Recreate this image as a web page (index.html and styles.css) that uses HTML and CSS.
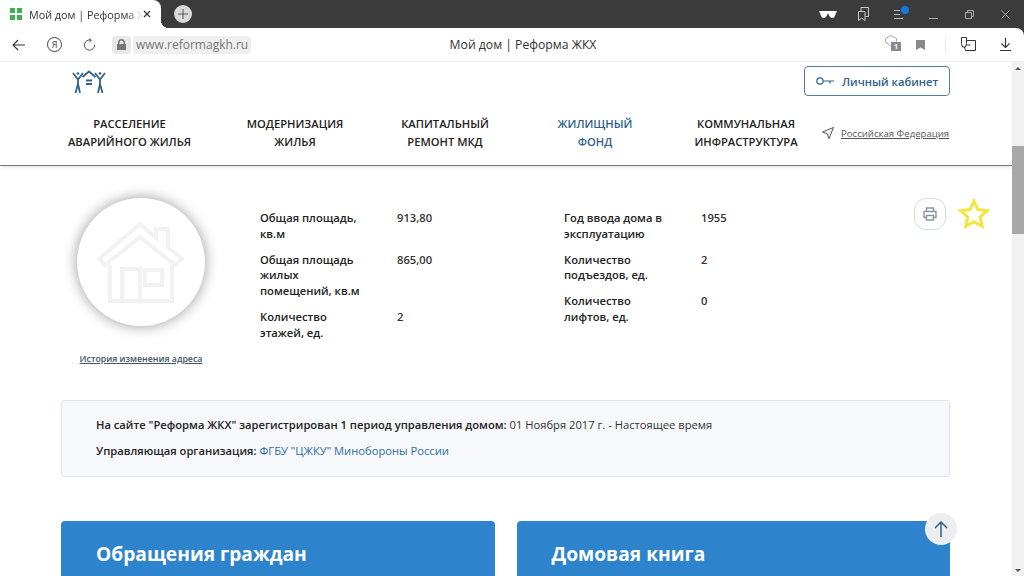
FILE: index.html
```html
<!DOCTYPE html>
<html lang="ru">

<head>
    <meta charset="UTF-8">
    <title>Мой дом | Реформа ЖКХ</title>
    <link rel="stylesheet" href="styles.css">
</head>

<body>
    <div class="tabbar">
        <div class="tab">
            <svg class="tab-icon" width="12" height="12" viewBox="0 0 12 12">
                <rect width="5" height="5" fill="#3db14b" />
                <rect x="7" width="5" height="5" fill="#3db14b" />
                <rect y="7" width="5" height="5" fill="#3db14b" />
                <rect x="7" y="7" width="5" height="5" fill="#3db14b" />
            </svg>
            <span class="tab-title">Мой дом | Реформа ЖКХ</span>
            <svg width="8" height="8" viewBox="0 0 8 8" stroke="#333" stroke-width="1.2">
                <path d="M1 1l6 6M7 1l-6 6" />
            </svg>
        </div>
        <div class="new-tab">
            <svg width="10" height="10" viewBox="0 0 10 10" stroke="#555" stroke-width="1">
                <path d="M5 0v10M0 5h10" />
            </svg>
        </div>
        <div class="window-btns">
            <svg width="18" height="7" viewBox="0 0 20 8" fill="#fff">
                <path d="M0 0h20v1.500l-1 .5c-.5 3-1.500 6-4 6s-4-3-4.500-5h-1c-.5 2-2 5-4.500 5s-3.500-3-4-6l-1-.5z" />
            </svg>
            <svg class="win-collections" width="11" height="14" viewBox="0 0 11 14" fill="none" stroke="#ccc">
                <path d="M.5 4.500h6.500v9l-3.250-2.500-3.250 2.500zM3 4V.5h7.500v9H7.500" />
            </svg>
            <div class="win-menu">
                <svg width="9" height="9" viewBox="0 0 9 9" stroke="#bbb">
                    <path d="M0 .5h6M0 4.500h6M0 8.500h9" />
                </svg>
                <span class="win-dot"></span>
            </div>
            <svg class="win-min" width="9" height="9" viewBox="0 0 9 9" stroke="#aaa">
                <path d="M0 8.500h9" />
            </svg>
            <svg class="win-restore" width="9" height="9" viewBox="0 0 9 9" fill="none" stroke="#aaa">
                <path d="M.5 2.500h6v6h-6zM2.500 2.500v-2h6v6h-2" />
            </svg>
            <svg class="win-close" width="9" height="9" viewBox="0 0 9 9" stroke="#aaa">
                <path d="M.5 .5l8 8M8.500 .5l-8 8" />
            </svg>
        </div>
    </div>

    <div class="toolbar">
        <svg class="tool-back" width="13" height="12" viewBox="0 0 13 12" fill="none" stroke="#333" stroke-width="1.100">
            <path d="M13 6H1M6 1L1 6l5 5" />
        </svg>
        <span class="tool-ya">Я</span>
        <svg class="tool-reload" width="13" height="14" viewBox="0 0 14 14" fill="none" stroke="#444">
            <path d="M8.500 1.800A5.500 5.500 0 1 0 12.500 7M6.500 .2l2.300 1.600-1.700 2.200" />
        </svg>
        <span class="lock">
            <svg width="9" height="11" viewBox="0 0 9 11">
                <path d="M1 5V3.500a3.500 3.500 0 0 1 7 0V5h1v6H0V5zM2.500 5h4V3.500a2 2 0 0 0-4 0z" fill="#777" />
            </svg>
        </span>
        <span class="url">www.reformagkh.ru</span>
        <span class="page-title">Мой дом | Реформа ЖКХ</span>
        <div class="tool-right">
            <span class="shield">
                <svg width="12" height="12" viewBox="0 0 12 12" fill="none" stroke="#aaa">
                    <path d="M.5 3.500L6 .5l5.500 3v3L6 11.500.5 6.500z" />
                </svg>
                <span class="shield-count">1</span>
            </span>
            <svg class="tool-mark" width="9" height="10" viewBox="0 0 9 10" fill="#8a8a8a">
                <path d="M0 0h9v10L4.500 7.500 0 10z" />
            </svg>
            <span class="tool-sep"></span>
            <svg class="tool-wallet" width="15" height="15" viewBox="0 0 15 15" fill="none" stroke="#333">
                <path d="M5.500 3.500h9v10H4.500l-1-3.500M.5 .5h5v6l-1 3.500h-3L.5 6.500zM5.500 8h4" />
            </svg>
            <svg class="tool-down" width="11" height="13" viewBox="0 0 11 13" fill="none" stroke="#333" stroke-width="1.100">
                <path d="M5.500 0v9.500M1.500 5.500l4 4 4-4M0 12.500h11" />
            </svg>
        </div>
    </div>

    <div class="viewport">
        <div class="page">
            <header class="site-header">
                <div class="header-top">
                    <svg class="logo" width="34" height="23" viewBox="0 0 34 23" fill="none" stroke="#2f628c" stroke-width="1.800">
                        <path d="M1 3l5 6.500L11 3M6 9.500V14L3.500 23M6 14l2 9" />
                        <path d="M33 3l-5 6.500L23 3M28 9.500V14l2.500 9M28 14l-2 9" />
                        <path d="M10.500 7L17 1.500 23.500 7" />
                        <path d="M14 10.500h6M14 14h6" stroke-width="2" />
                        <circle cx="6" cy="3.500" r="1.300" fill="#2f628c" stroke="none" />
                        <circle cx="28" cy="3.500" r="1.300" fill="#2f628c" stroke="none" />
                    </svg>
                    <a class="cabinet-btn">
                        <svg width="18" height="8" viewBox="0 0 18 8" fill="none" stroke="#2f628c" stroke-width="1.200">
                            <circle cx="4" cy="4" r="3.200" />
                            <path d="M7 4h11M14 4v2.500" />
                        </svg>
                        Личный кабинет
                    </a>
                </div>
                <nav class="main-nav">
                    <a class="nav-item nav-w1">РАССЕЛЕНИЕ<br>АВАРИЙНОГО ЖИЛЬЯ</a>
                    <a class="nav-item nav-w2">МОДЕРНИЗАЦИЯ<br>ЖИЛЬЯ</a>
                    <a class="nav-item nav-w3">КАПИТАЛЬНЫЙ<br>РЕМОНТ МКД</a>
                    <a class="nav-item nav-w4 nav-active">ЖИЛИЩНЫЙ<br>ФОНД</a>
                    <a class="nav-item nav-w5">КОММУНАЛЬНАЯ<br>ИНФРАСТРУКТУРА</a>
                    <a class="region">
                        <svg width="12" height="12" viewBox="0 0 12 12" fill="none" stroke="#555">
                            <path d="M11.500 .5L.5 5l4.700 1.800L7 11.500z" />
                        </svg>
                        <span>Российская Федерация</span>
                    </a>
                </nav>
            </header>

            <section class="house">
                <div class="house-photo">
                    <div class="house-circle">
                        <svg width="90" height="82" viewBox="0 0 90 82" fill="none" stroke="#f2f2f2" stroke-width="4">
                            <path d="M3 38L44 3l16 14V8h12v18l14 12-7 6-35-28L9 44z" />
                            <path d="M14 44v36h62V44" />
                            <path d="M26 80V48h18v32M49 49h17v15H49z" />
                        </svg>
                    </div>
                    <a class="history-link">История изменения адреса</a>
                </div>
                <div class="house-facts">
                    <dl class="facts facts-left">
                        <dt>Общая площадь, кв.м</dt>
                        <dd>913,80</dd>
                        <dt>Общая площадь жилых помещений, кв.м</dt>
                        <dd>865,00</dd>
                        <dt>Количество этажей, ед.</dt>
                        <dd>2</dd>
                    </dl>
                    <dl class="facts facts-right">
                        <dt>Год ввода дома в эксплуатацию</dt>
                        <dd>1955</dd>
                        <dt>Количество подъездов, ед.</dt>
                        <dd>2</dd>
                        <dt>Количество лифтов, ед.</dt>
                        <dd>0</dd>
                    </dl>
                </div>
                <div class="house-actions">
                    <span class="print-btn">
                        <svg width="14" height="14" viewBox="0 0 14 14" fill="none" stroke="#8a96a0" stroke-width="1.400">
                            <path d="M3.500 4V1h7v3M3 10.500H1V4.500h12v6h-2M3.500 8.500h7V13h-7z" />
                        </svg>
                    </span>
                    <svg class="star" width="32" height="31" viewBox="0 0 32 31" fill="none" stroke="#f6e53d" stroke-width="3">
                        <path d="M16 3l3.900 8.600 9.300 1.100-6.900 6.300 1.900 9.200L16 23.600l-8.200 4.600 1.900-9.200-6.900-6.300 9.300-1.100z" />
                    </svg>
                </div>
            </section>

            <section class="notice">
                <p><b>На сайте "Реформа ЖКХ" зарегистрирован 1 период управления домом:</b> 01 Ноября 2017 г. - Настоящее время</p>
                <p><b>Управляющая организация:</b> <a class="notice-link">ФГБУ "ЦЖКУ" Минобороны России</a></p>
            </section>

            <section class="cards">
                <div class="card">Обращения граждан</div>
                <div class="card">Домовая книга</div>
            </section>

            <span class="up-btn">
                <svg width="14" height="16" viewBox="0 0 14 16" fill="none" stroke="#2f628c" stroke-width="1.500">
                    <path d="M7 16V1M1 7l6-6 6 6" />
                </svg>
            </span>
        </div>
        <div class="scrollbar">
            <span class="arrow-up"></span>
            <span class="thumb"></span>
            <span class="arrow-down"></span>
        </div>
    </div>
</body>

</html>
```

FILE: styles.css
```css
* {
    box-sizing: border-box;
}

html,
body {
    margin: 0;
    height: 576px;
    overflow: hidden;
}

body {
    font-family: "Open Sans", "Noto Sans", sans-serif;
    color: #222;
    background-color: #3b3b3b;
}

a {
    color: inherit;
}

/* browser chrome */
.tabbar {
    display: flex;
    align-items: center;
    height: 28px;
}

.tab {
    position: relative;
    display: flex;
    align-items: center;
    width: 161px;
    height: 28px;
    padding: 0 10px 0 10px;
    background-color: #fff;
    border-radius: 0 8px 0 0;
}

.tab::after {
    content: "";
    position: absolute;
    left: 100%;
    bottom: 0;
    width: 8px;
    height: 8px;
    background: radial-gradient(circle at 100% 0, transparent 8px, #fff 8px);
}

.tab-icon {
    flex: none;
    margin-right: 7px;
}

.tab-title {
    flex: 1;
    overflow: hidden;
    white-space: nowrap;
    font-size: 10.800px;
    color: #333;
    -webkit-mask-image: linear-gradient(to right, #000 86%, transparent);
    mask-image: linear-gradient(to right, #000 86%, transparent);
}

.new-tab {
    display: flex;
    align-items: center;
    justify-content: center;
    width: 18px;
    height: 18px;
    margin-left: 13px;
    border-radius: 50%;
    background-color: #d9d9d9;
}

.window-btns {
    display: flex;
    align-items: center;
    margin-left: auto;
}

.win-collections {
    margin-left: 21px;
}

.win-menu {
    position: relative;
    display: flex;
    margin-left: 25px;
}

.win-dot {
    position: absolute;
    top: -4px;
    right: -6px;
    width: 8px;
    height: 8px;
    border-radius: 50%;
    background-color: #1479d9;
}

.win-min {
    margin-left: 26px;
}

.win-restore {
    margin-left: 27px;
}

.win-close {
    margin: 0 14px 0 27px;
}

.toolbar {
    position: relative;
    display: flex;
    align-items: center;
    height: 34px;
    padding-left: 12px;
    background-color: #fff;
    border-bottom: 1px solid #eee;
    border-radius: 0 8px 0 0;
}

.tool-ya {
    display: flex;
    align-items: center;
    justify-content: center;
    width: 15px;
    height: 15px;
    margin-left: 22px;
    border: 1px solid #444;
    border-radius: 50%;
    font-size: 9px;
    color: #444;
}

.tool-reload {
    margin-left: 21px;
}

.lock {
    display: flex;
    align-items: center;
    justify-content: center;
    width: 19px;
    height: 18px;
    margin-left: 16px;
    border-radius: 4px;
    background-color: #e8e8e8;
}

.url {
    height: 18px;
    margin-left: 2px;
    padding: 0 3px;
    border-radius: 4px;
    background-color: #efefef;
    font-size: 12px;
    line-height: 18px;
    color: #777;
}

.page-title {
    position: absolute;
    left: 22px;
    right: 0;
    text-align: center;
    font-size: 12.200px;
    color: #333;
}

.tool-right {
    position: relative;
    display: flex;
    align-items: center;
    margin-left: auto;
}

.shield {
    position: relative;
    display: flex;
    margin-top: -7px;
}

.shield-count {
    position: absolute;
    top: 7px;
    left: 6px;
    width: 10px;
    height: 9px;
    background-color: #8a8a8a;
    font-size: 7px;
    font-weight: 700;
    line-height: 9px;
    text-align: center;
    color: #fff;
}

.tool-mark {
    margin-left: 19px;
}

.tool-sep {
    width: 1px;
    height: 14px;
    margin-left: 20px;
    background-color: #e6e6e6;
}

.tool-wallet {
    margin-left: 15px;
}

.tool-down {
    margin: 0 13px 0 24px;
}

.viewport {
    display: flex;
    height: 514px;
    overflow: hidden;
    background-color: #fff;
}

.scrollbar {
    position: relative;
    flex: none;
    width: 12px;
    background-color: #f1f1f1;
}

.thumb {
    position: absolute;
    top: 84px;
    left: 0;
    width: 12px;
    height: 88px;
    background-color: #a8a8a8;
}

.arrow-up,
.arrow-down {
    position: absolute;
    left: 3px;
    width: 0;
    height: 0;
    border-left: 3px solid transparent;
    border-right: 3px solid transparent;
}

.arrow-up {
    top: 5px;
    border-bottom: 3px solid #555;
}

.arrow-down {
    bottom: 4px;
    border-top: 3px solid #555;
}

/* site */
.page {
    position: relative;
    flex: 1;
    min-width: 0;
}

.site-header {
    height: 104px;
    padding: 4px 62px 0 61px;
    border-bottom: 1px solid #777;
    box-shadow: 0 1px 3px rgba(0, 0, 0, 0.12);
}

.header-top {
    display: flex;
    align-items: flex-start;
    justify-content: space-between;
    height: 49px;
}

.logo {
    margin: 4px 0 0 11px;
}

.cabinet-btn {
    display: flex;
    align-items: center;
    gap: 8px;
    width: 146px;
    height: 30px;
    padding-left: 11px;
    border: 1px solid #4f7d9e;
    border-radius: 4px;
    font-size: 11.200px;
    font-weight: 600;
    color: #2f628c;
}

.main-nav {
    display: flex;
    align-items: flex-start;
}

.nav-item {
    flex: none;
    font-size: 11.200px;
    font-weight: 600;
    line-height: 18px;
    text-align: center;
    color: #222;
}

.nav-w1 {
    width: 137px;
}

.nav-w2 {
    width: 144px;
    margin-left: 25px;
}

.nav-w3 {
    width: 156px;
}

.nav-w4 {
    width: 144px;
}

.nav-w5 {
    width: 158px;
}

.nav-active {
    color: #2f628c;
}

.region {
    display: flex;
    align-items: center;
    gap: 7px;
    height: 18px;
    margin: 9px 0 0 -3px;
    white-space: nowrap;
    font-size: 9.600px;
    color: #555;
}

.region span {
    text-decoration: underline;
}

.house {
    display: flex;
    height: 234px;
    padding: 32px 0 0 61px;
}

.house-photo {
    display: flex;
    flex: none;
    flex-direction: column;
    align-items: center;
    width: 160px;
}

.house-circle {
    display: flex;
    align-items: center;
    justify-content: center;
    width: 128px;
    height: 128px;
    border-radius: 50%;
    background-color: #fff;
    box-shadow: 0 0 14px rgba(0, 0, 0, 0.4);
}

.history-link {
    margin-top: 27px;
    font-size: 8.800px;
    font-weight: 600;
    color: #3f5666;
    text-decoration: underline;
}

.house-facts {
    display: flex;
    margin: 12px 0 0 39px;
}

.facts {
    display: grid;
    grid-template-columns: 137px 1fr;
    grid-auto-rows: min-content;
    row-gap: 10px;
    width: 304px;
    margin: 0;
    font-size: 11.200px;
    line-height: 15.800px;
}

.facts dt {
    width: 106px;
    font-weight: 600;
}

.facts dd {
    margin: 0;
    font-weight: 600;
    color: #333;
}

.house-actions {
    display: flex;
    gap: 12px;
    align-items: flex-start;
    margin-left: 46px;
}

.print-btn {
    display: flex;
    align-items: center;
    justify-content: center;
    width: 32px;
    height: 32px;
    border: 1px solid #d5dade;
    border-radius: 12px;
}

.notice {
    width: 889px;
    height: 77px;
    margin-left: 61px;
    padding: 16px 34px 0;
    border: 1px solid #dfe6ee;
    border-radius: 3px;
    background-color: #f6f8fb;
    font-size: 11.200px;
    line-height: 16px;
    color: #333;
}

.notice p {
    margin: 0 0 10px;
}

.notice b {
    font-weight: 600;
    color: #222;
}

.notice-link {
    color: #2f6f9f;
}

.cards {
    display: flex;
    gap: 22px;
    width: 889px;
    margin: 44px 0 0 61px;
}

.card {
    flex: 1;
    height: 80px;
    padding: 20px 35px 0;
    border-radius: 4px 4px 0 0;
    background-color: #2d84cc;
    font-size: 19.200px;
    font-weight: 700;
    line-height: 26px;
    color: #fff;
}

.up-btn {
    position: absolute;
    top: 451px;
    left: 925px;
    display: flex;
    align-items: center;
    justify-content: center;
    width: 32px;
    height: 32px;
    border-radius: 50%;
    background-color: #edeeef;
}
```
